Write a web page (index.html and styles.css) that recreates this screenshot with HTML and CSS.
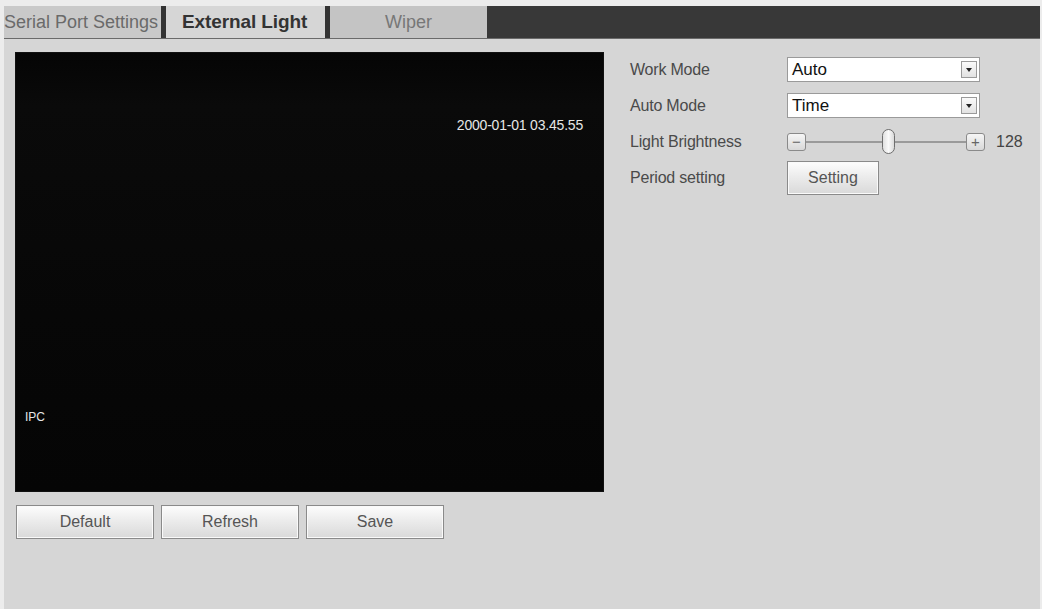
FILE: index.html
```html
<!DOCTYPE html>
<html lang="en">
<head>
  <meta charset="UTF-8">
  <title>External Light</title>
  <link rel="stylesheet" href="styles.css">
</head>
<body>
  <div class="page">
    <div class="tabs">
      <div class="tab">Serial Port Settings</div>
      <div class="tab active">External Light</div>
      <div class="tab center">Wiper</div>
      <div class="tab-fill"></div>
    </div>

    <div class="panel">
      <div class="left">
        <div class="video">
          <span class="osd time">2000-01-01 03.45.55</span>
          <span class="osd name">IPC</span>
        </div>
        <div class="actions">
          <button class="btn wide">Default</button>
          <button class="btn wide">Refresh</button>
          <button class="btn wide">Save</button>
        </div>
      </div>

      <div class="form">
        <div class="row">
          <label>Work Mode</label>
          <div class="select"><span>Auto</span><i class="arrow"></i></div>
        </div>
        <div class="row">
          <label>Auto Mode</label>
          <div class="select"><span>Time</span><i class="arrow"></i></div>
        </div>
        <div class="row">
          <label>Light Brightness</label>
          <div class="slider">
            <span class="step">&minus;</span>
            <div class="track"><span class="thumb"></span></div>
            <span class="step">+</span>
            <span class="value">128</span>
          </div>
        </div>
        <div class="row">
          <label>Period setting</label>
          <button class="btn small">Setting</button>
        </div>
      </div>
    </div>
  </div>
</body>
</html>
```

FILE: styles.css
```css
body {
  margin: 0;
  background: #ececec;
  font-family: "Liberation Sans", Arial, sans-serif;
  color: #444;
}

.page {
  padding: 6px 2px 0 4px;
  height: 603px;
  display: flex;
  flex-direction: column;
}

/* tab strip */
.tabs {
  display: flex;
  height: 32px;
  background: #383838;
  border-bottom: 1px solid #6a6a6a;
}

.tab {
  width: 157px;
  background: #c9c9c9;
  color: #6a6a6a;
  font-size: 18px;
  line-height: 32px;
  white-space: nowrap;
  overflow: hidden;
  border-right: 5px solid #333;
}

.tab.active {
  box-sizing: border-box;
  width: 164px;
  padding-left: 16px;
  background: #d6d6d6;
  color: #333;
  font-weight: bold;
  font-size: 19px;
  letter-spacing: -0.1px;
}

.tab.center {
  text-align: center;
  width: 157px;
  border-right: none;
  background: #c4c4c4;
  color: #777;
}

.tab-fill {
  flex: 1;
}

/* content */
.panel {
  flex: 1;
  background: #d6d6d6;
  display: flex;
  gap: 26px;
  padding: 13px 0 0 11px;
}

.video {
  position: relative;
  width: 589px;
  height: 440px;
  background: linear-gradient(#050505, #0a0a0a 12%, #070707 60%, #050505);
  border: 1px solid #111;
  box-sizing: border-box;
}

.osd {
  position: absolute;
  color: #e6e6e6;
  font-size: 14px;
  letter-spacing: -0.2px;
}

.osd.time {
  top: 64px;
  right: 20px;
}

.osd.name {
  top: 357px;
  left: 9px;
  font-size: 12px;
  letter-spacing: 0;
}

.actions {
  display: flex;
  gap: 7px;
  margin-top: 13px;
  padding-left: 1px;
}

.btn {
  font-family: inherit;
  font-size: 16px;
  color: #555;
  border: 1px solid #8a8a8a;
  background: linear-gradient(#fdfdfd, #ececec 45%, #d9d9d9);
  padding: 0;
  box-shadow: inset 0 0 0 1px #fafafa;
}

.btn.wide {
  width: 138px;
  height: 34px;
}

.btn.small {
  width: 92px;
  height: 34px;
}

/* form */
.form {
  padding-top: 5px;
  display: flex;
  flex-direction: column;
  gap: 11px;
}

.row {
  display: flex;
  align-items: center;
  height: 25px;
}

.row label {
  width: 157px;
  font-size: 16px;
  letter-spacing: -0.2px;
  color: #4a4a4a;
}

.select {
  width: 193px;
  height: 25px;
  box-sizing: border-box;
  background: #fff;
  border: 1px solid #9a9a9a;
  display: flex;
  align-items: center;
  justify-content: space-between;
  padding: 0 2px 0 4px;
  font-size: 17px;
  color: #111;
}

.arrow {
  width: 16px;
  height: 17px;
  box-sizing: border-box;
  border: 1px solid #9a9a9a;
  background: linear-gradient(#fafafa, #e2e2e2);
  position: relative;
}

.arrow::after {
  content: "";
  position: absolute;
  left: 4px;
  top: 6px;
  border-left: 3px solid transparent;
  border-right: 3px solid transparent;
  border-top: 4px solid #222;
}

.slider {
  display: flex;
  align-items: center;
}

.step {
  width: 19px;
  height: 18px;
  box-sizing: border-box;
  border: 1px solid #8a8a8a;
  border-radius: 3px;
  background: linear-gradient(#f6f6f6, #d8d8d8);
  color: #666;
  font-size: 15px;
  line-height: 15px;
  text-align: center;
}

.track {
  width: 160px;
  height: 2px;
  background: #9a9a9a;
  position: relative;
}

.thumb {
  position: absolute;
  left: 76px;
  top: -12px;
  width: 13px;
  height: 25px;
  box-sizing: border-box;
  border: 1px solid #6e6e6e;
  border-radius: 7px;
  background: linear-gradient(90deg, #e0e0e0, #fafafa 50%, #dadada);
}

.value {
  margin-left: 11px;
  font-size: 16px;
  color: #444;
}
```
